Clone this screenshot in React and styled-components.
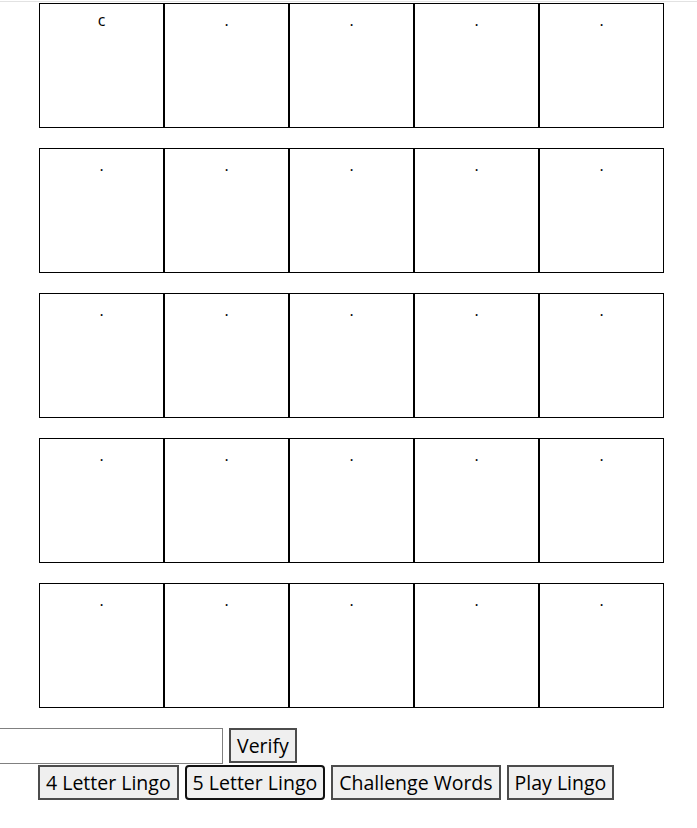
import React from 'react';
import styled, { createGlobalStyle } from 'styled-components';

const GlobalStyle = createGlobalStyle`
  body {
    margin: 0;
    background: #fff;
    font-family: "Open Sans", "Noto Sans", sans-serif;
    color: #000;
  }
`;

const Page = styled.div`
  width: 697px;
  overflow: hidden;
`;

const TopRule = styled.div`
  margin-top: 1px;
  border-top: 1px solid #e2e2e2;
`;

const Content = styled.div`
  padding: 1px 0 0 38px;
`;

const Board = styled.div`
  display: flex;
  flex-direction: column;
  gap: 20px;
  margin-left: 1px;
`;

const Row = styled.div`
  display: flex;
`;

const Cell = styled.div`
  width: 125px;
  height: 125px;
  box-sizing: border-box;
  border: 1px solid #000;
  padding-top: 5px;
  text-align: center;
  font-size: 16px;
  line-height: 22px;
`;

const Controls = styled.div`
  margin-top: 20px;
  display: flex;
  flex-direction: column;
`;

const GuessRow = styled.div`
  display: flex;
  align-items: flex-start;
  gap: 6px;
  margin-left: -78px;
`;

const GuessInput = styled.input`
  width: 263px;
  height: 36px;
  box-sizing: border-box;
  border: 1px solid #808080;
  font-family: inherit;
  font-size: 19px;
  padding: 0 4px;
  outline: none;
`;

const Button = styled.button`
  height: 35px;
  box-sizing: border-box;
  padding: 0 6px;
  font-family: "Open Sans", "Noto Sans", sans-serif;
  font-size: 19.5px;
  color: #000;
  background: #efefef;
  border: 2px solid ${p => (p.$active ? '#111' : '#4c4c4c')};
  border-radius: ${p => (p.$active ? '4px' : '0')};
  white-space: nowrap;
`;

const ModeRow = styled.div`
  display: flex;
  gap: 6px;
  margin-top: 1px;
`;

const grid = [
  ['c', '.', '.', '.', '.'],
  ['.', '.', '.', '.', '.'],
  ['.', '.', '.', '.', '.'],
  ['.', '.', '.', '.', '.'],
  ['.', '.', '.', '.', '.'],
];

const modes = ['4 Letter Lingo', '5 Letter Lingo', 'Challenge Words', 'Play Lingo'];

const App = () => (
  <Page>
    <GlobalStyle />
    <TopRule />
    <Content>
      <Board>
        {grid.map((row, r) => (
          <Row key={r}>
            {row.map((ch, c) => (
              <Cell key={c}>{ch}</Cell>
            ))}
          </Row>
        ))}
      </Board>
      <Controls>
        <GuessRow>
          <GuessInput type="text" />
          <Button>Verify</Button>
        </GuessRow>
        <ModeRow>
          {modes.map(m => (
            <Button key={m} $active={m === '5 Letter Lingo'}>{m}</Button>
          ))}
        </ModeRow>
      </Controls>
    </Content>
  </Page>
);

export default App;
